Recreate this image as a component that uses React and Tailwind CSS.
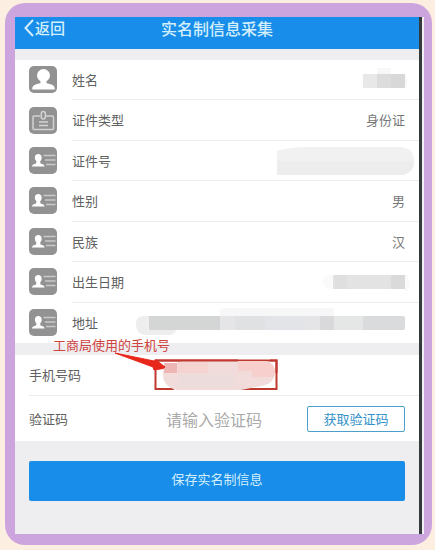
import { useState } from "react";

function PersonIcon() {
  return (
    <svg viewBox="0 0 28 28" className="size-7 shrink-0" aria-hidden="true">
      <rect width="28" height="27" rx="5" fill="#929292" />
      <circle cx="14.500" cy="9.500" r="6.500" fill="#fff" />
      <path
        d="M11.500 14h6v3c1.500.7 3.500.9 5.500 1.700 2 .9 2.800 2.300 2.800 4.800H3.200c0-2.500.8-3.900 2.800-4.800 2-.8 4-1 5.500-1.700z"
        fill="#fff"
      />
    </svg>
  );
}

function BadgeIcon() {
  return (
    <svg viewBox="0 0 28 28" className="size-7 shrink-0" aria-hidden="true">
      <rect width="28" height="27" rx="5" fill="#929292" />
      <g fill="none" stroke="#d2d2d2" strokeWidth="1.500">
        <path d="M11.500 9H5q-1 0-1 1v11.500q0 1 1 1h18.500q1 0 1-1V10q0-1-1-1H17" />
        <rect x="12.300" y="4.500" width="4" height="7.500" rx="2" />
        <path d="M10 15h9M10 18.500h9" />
      </g>
    </svg>
  );
}

function CardIcon() {
  return (
    <svg viewBox="0 0 28 28" className="size-7 shrink-0" aria-hidden="true">
      <rect width="28" height="27" rx="5" fill="#929292" />
      <path
        d="M9.300 7c2.200 0 3.400 1.300 3.400 3.400 0 1.700-.6 3-1.400 3.800v2c1 .7 4 .8 4.400 3.300H2.900c.4-2.500 3.400-2.600 4.400-3.300v-2c-.8-.8-1.400-2.100-1.400-3.800C5.900 8.300 7.100 7 9.300 7z"
        fill="#fff"
      />
      <path d="M14.500 8.500h12M16 13h10.500M17 17.500h9.500" stroke="#c9c9c9" strokeWidth="1.700" />
    </svg>
  );
}

function NameMask() {
  return (
    <svg width="42" height="28" className="overflow-visible" aria-hidden="true">
      <path d="M14 2h14v6h14q3 6 1 14l-1-2H14z" fill="#f7f7f7" />
      <rect y="8" width="14" height="14" fill="#e8e8e8" />
      <rect x="14" y="8" width="28" height="14" fill="#dcdcdc" />
      <rect x="28" y="8" width="14" height="14" fill="#d8d8d8" />
    </svg>
  );
}

function NumberMask() {
  return (
    <svg width="128" height="28" className="overflow-visible" aria-hidden="true">
      <path d="M0 4Q14 0 28 0h94q15 0 15 14t-15 14H0z" fill="#f1f1f1" />
      <path d="M0 14h137q0 14-15 14H0z" fill="#ededee" />
    </svg>
  );
}

function BirthMask() {
  return (
    <svg width="72" height="28" className="overflow-visible" aria-hidden="true">
      <path d="M-10 14q0-7 10-7h74q5 8 0 17l-3-3H0q-10 0-10-7z" fill="#fafafa" />
      <rect y="7" width="72" height="14" fill="#e3e3e4" />
      <rect x="2" y="7" width="12" height="14" fill="#dfdfe0" />
      <rect x="58" y="7" width="14" height="14" fill="#dadadb" />
    </svg>
  );
}

function AddressMask() {
  const blocks = [
    [14, 71, "#d4d6d6"],
    [85, 15, "#e5e5e7"],
    [100, 30, "#e0e1e3"],
    [130, 40, "#e3e4e8"],
    [170, 15, "#e5e5e7"],
    [185, 14, "#d9d9db"],
    [199, 29, "#e5e6e6"],
  ];
  return (
    <svg width="270" height="28" className="overflow-visible" aria-hidden="true">
      <path d="M14 7H8q-7 0-7 8 0 10 9 11h22q8 0 9-5H14z" fill="#eeeeee" />
      <path d="M85 7V2q0-3 6-3h108v8z" fill="#f7f7f8" />
      {blocks.map(([x, width, fill]) => (
        <rect key={x} x={x} y="7" width={width} height="14" fill={fill} />
      ))}
      <path d="M228 7h40q2 0 2 2v10q0 2-2 2h-40z" fill="#dadbdc" />
    </svg>
  );
}

function PhoneMask() {
  return (
    <svg width="124" height="32" className="pointer-events-none absolute inset-0 overflow-visible" aria-hidden="true">
      <path d="M20 30H1.500V1.500H122.500V30H80" fill="none" stroke="#c0392f" strokeWidth="2" />
      <path d="M10 4h12l6-2h84q9 2 9 12-1 11-14 13l-20 4H22Q9 27 9 16z" fill="#f2dcdb" />
      <path d="M84 2h28q9 2 9 12-1 3-2 4H98V12H84z" fill="#f7cfcd" />
      <path d="M24 3h30v11H24z" fill="#f4d3d1" />
      <path d="M10 4h13v10H10z" fill="#edb5b4" />
      <path d="M24 15h56v14H24z" fill="#ecdcdb" />
      <path d="M1 1.500h83M116 1.500h6.500V14" fill="none" stroke="#c0392f" strokeWidth="2" />
      <path d="M-39-6 0 2l2-1 9 7q-1 2-5 2l-6 1-1-3z" fill="#e8271b" stroke="#e8271b" />
    </svg>
  );
}

const rows = [
  { label: "姓名", icon: PersonIcon, value: <NameMask /> },
  { label: "证件类型", icon: BadgeIcon, value: "身份证" },
  { label: "证件号", icon: CardIcon, value: <NumberMask /> },
  { label: "性别", icon: CardIcon, value: "男" },
  { label: "民族", icon: CardIcon, value: "汉" },
  { label: "出生日期", icon: CardIcon, value: <BirthMask /> },
  { label: "地址", icon: CardIcon, value: <AddressMask /> },
];

export default function App() {
  const [phone, setPhone] = useState("");
  const [code, setCode] = useState("");

  return (
    <div className="min-h-screen bg-[#fdeee2] pt-[3px] pr-[3px] pb-[5px] pl-[5px] font-['Noto_Sans_CJK_SC',sans-serif] text-[13px] text-[#606060]">
      <div className="rounded-[20px] bg-[#cda5de] pt-[14px] pr-2 pb-[11px] pl-[10px]">
        <div className="border-r-2 border-[#f3edf6]">
          <main className="border-r-3 border-[#343a3a] bg-[#eeeef1] pb-[33px]">
            <header className="grid h-8 grid-cols-[1fr_auto_1fr] items-center bg-[#188de9] pb-2.5 text-[#d3effc]">
              <a href="#back" className="flex items-center pl-2 text-[15px] font-medium leading-5">
                <svg width="12" height="20" viewBox="0 0 12 20" fill="none" stroke="currentColor" strokeWidth="2" aria-hidden="true">
                  <path d="M10 2 2.500 10 10 18" />
                </svg>
                返回
              </a>
              <h1 className="text-base font-medium leading-5">实名制信息采集</h1>
            </header>

            <dl className="mt-[11px] grid h-[283px] grid-rows-7 bg-white">
              {rows.map(({ label, icon: Icon, value }) => (
                <div key={label} className="group flex items-center pl-[14px]">
                  <Icon />
                  <div className="ml-[15px] flex flex-1 items-center justify-between self-stretch border-b border-[#ededed] pr-[14px] group-last:border-b-0">
                    <dt className="whitespace-nowrap">{label}</dt>
                    <dd className="text-[#777777]">{value}</dd>
                  </div>
                </div>
              ))}
            </dl>

            <form className="relative pt-3" onSubmit={(event) => event.preventDefault()}>
              <p className="absolute -top-2 left-[38px] leading-5 text-[#cf4440]">工商局使用的手机号</p>
              <div className="bg-white pl-[14px]">
                <div className="flex h-[41px] items-center border-b border-[#ededed]">
                  <label htmlFor="phone" className="w-[125px]">手机号码</label>
                  <div className="relative h-8 w-[124px]">
                    <input
                      id="phone"
                      type="tel"
                      value={phone}
                      onChange={(event) => setPhone(event.target.value)}
                      className="size-full px-3 outline-none"
                    />
                    <PhoneMask />
                  </div>
                </div>
                <div className="flex h-[45px] items-center pr-[14px]">
                  <label htmlFor="code" className="w-[137px]">验证码</label>
                  <input
                    id="code"
                    value={code}
                    onChange={(event) => setCode(event.target.value)}
                    placeholder="请输入验证码"
                    className="min-w-0 flex-1 text-base outline-none placeholder:text-[#aaaaaa]"
                  />
                  <button type="button" className="h-[26px] w-[98px] rounded-xs border border-[#4b9fca] text-[#3292c8]">
                    获取验证码
                  </button>
                </div>
              </div>
              <div className="px-[14px] pt-5">
                <button type="submit" className="h-10 w-full rounded-xs bg-[#188de9] pb-1 text-[#d3effc]">
                  保存实名制信息
                </button>
              </div>
            </form>
          </main>
        </div>
      </div>
    </div>
  );
}
